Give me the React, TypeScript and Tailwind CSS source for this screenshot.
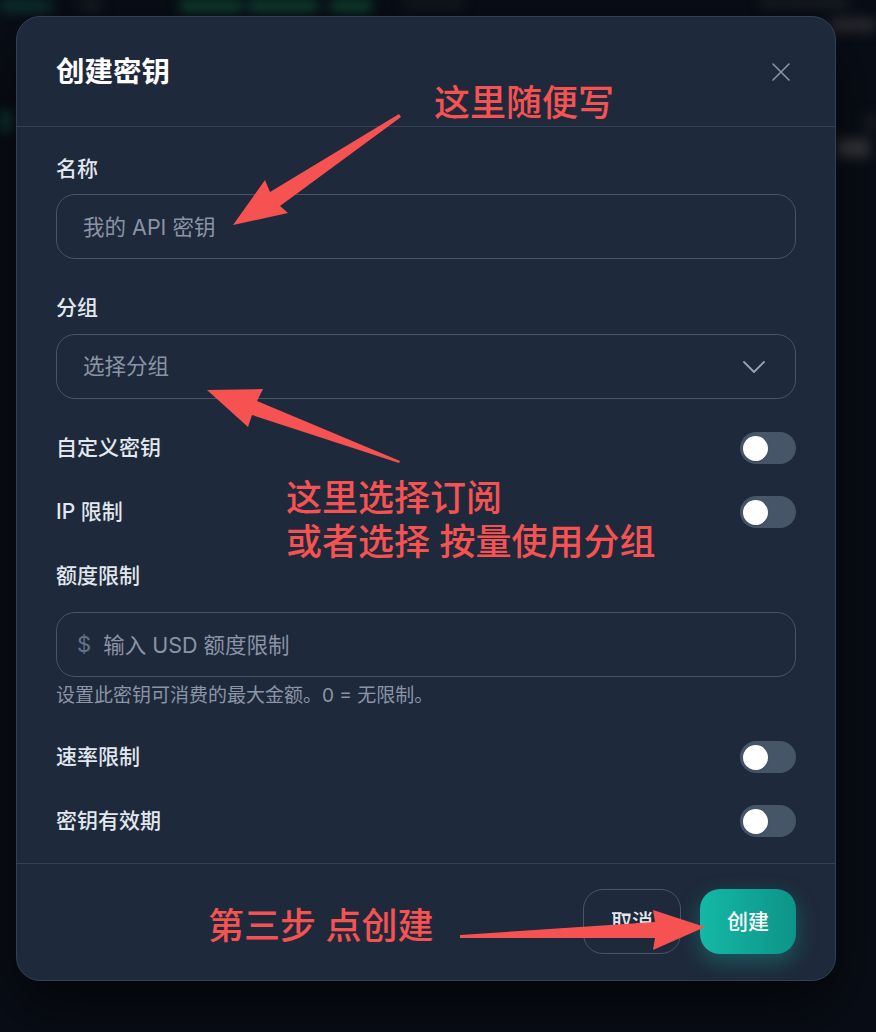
import React from "react";

// Sans stack used by the dialog: Latin from Inter, Chinese from Noto Sans CJK SC.
const FONT = "font-['Inter','Noto_Sans_CJK_SC',sans-serif]";

function Toggle() {
  return (
    <div className="flex h-8 w-14 shrink-0 items-center rounded-full bg-[#475569] p-[3px]">
      <div className="h-[25px] w-[25px] rounded-full bg-white shadow-sm" />
    </div>
  );
}

function ToggleRow({ label, className = "" }: { label: string; className?: string }) {
  return (
    <div className={`flex h-8 items-center justify-between ${className}`}>
      <span className="text-[21px] font-medium leading-7 text-[#e2e8f0]">{label}</span>
      <Toggle />
    </div>
  );
}

function FieldLabel({ children, className = "" }: { children: React.ReactNode; className?: string }) {
  return (
    <div className={`h-7 text-[21px] font-medium leading-7 text-[#e2e8f0] ${className}`}>{children}</div>
  );
}

// Dimmed app page sitting behind the dialog
function BackdropPage() {
  return (
    <div className="pointer-events-none blur-[6px]">
      <div className="flex h-[12px] items-start">
        <div className="h-[12px] w-[52px] bg-[#0e3331]" />
        <div className="w-[28px]" />
        <div className="h-[10px] w-[22px] bg-[#1c1e26]" />
        <div className="w-[78px]" />
        <div className="h-[12px] w-[62px] bg-[#0f4430]" />
        <div className="w-[6px]" />
        <div className="h-[12px] w-[70px] bg-[#0f4430]" />
        <div className="w-[12px]" />
        <div className="h-[12px] w-[42px] bg-[#0f4430]" />
        <div className="w-[32px]" />
        <div className="h-[8px] w-[60px] bg-[#1a1c24]" />
        <div className="w-[296px]" />
        <div className="h-[6px] w-[90px] bg-[#24262c]" />
      </div>
      <div className="flex h-[20px] items-end justify-end">
        <div className="h-[14px] w-[46px] bg-[#2a2a2e]" />
      </div>
      <div className="flex h-[100px] items-end justify-between">
        <div className="h-[22px] w-[12px] bg-[#0f3b30]" />
        <div className="h-[18px] w-[10px] bg-[#1e2026]" />
      </div>
      <div className="flex h-[26px] items-end justify-end pr-[6px]">
        <div className="h-[20px] w-[34px] rounded bg-[#34343a]" />
      </div>
    </div>
  );
}

function CreateKeyDialog() {
  return (
    <div
      className={`absolute left-4 top-4 w-[820px] overflow-hidden rounded-3xl border border-[#334155] bg-[#1e293b] shadow-[0_25px_60px_rgba(0,0,0,0.6)] ${FONT}`}
    >
      {/* Header */}
      <div className="flex h-[110px] items-center justify-between border-b border-[#334155] pl-[39px] pr-[45px]">
        <h2 className="text-[28.5px] font-semibold leading-9 text-white">创建密钥</h2>
        <button className="text-[#8a94a6]" aria-label="关闭">
          <svg width="18" height="18" viewBox="0 0 18 18" fill="none" stroke="currentColor" strokeWidth="1.6" strokeLinecap="round">
            <path d="M1 1L17 17M17 1L1 17" />
          </svg>
        </button>
      </div>

      {/* Body */}
      <div className="flex flex-col px-[39px] pb-[26px] pt-[28px]">
        <FieldLabel>名称</FieldLabel>
        <input
          className="mt-[11px] h-[65px] w-full rounded-[19px] border border-[#475569] bg-transparent px-[26px] text-[21.5px] text-[#e2e8f0] outline-none placeholder:text-[#8a94a6]"
          placeholder="我的 API 密钥"
        />

        <FieldLabel className="mt-[35px]">分组</FieldLabel>
        <button className="mt-3 flex h-[65px] w-full items-center justify-between rounded-[19px] border border-[#475569] bg-transparent pl-[26px] pr-[30px]">
          <span className="text-[21.5px] text-[#8a94a6]">选择分组</span>
          <svg width="22" height="12" viewBox="0 0 22 12" fill="none" stroke="#94a3b8" strokeWidth="1.8" strokeLinecap="round" strokeLinejoin="round">
            <path d="M1 1L11 11L21 1" />
          </svg>
        </button>

        <ToggleRow label="自定义密钥" className="mt-[33px]" />
        <ToggleRow label="IP 限制" className="mt-8" />

        <FieldLabel className="mt-[34px]">额度限制</FieldLabel>
        <div className="mt-[22px] flex h-[65px] w-full items-center gap-[12px] rounded-[19px] border border-[#475569] pl-[20px]">
          <span className="text-[22px] text-[#64748b]">$</span>
          <input
            className="h-full flex-1 bg-transparent text-[21.5px] text-[#e2e8f0] outline-none placeholder:text-[#8a94a6]"
            placeholder="输入 USD 额度限制"
          />
        </div>
        <p className="mt-[7px] text-[19px] leading-6 text-[#8b95a7]">设置此密钥可消费的最大金额。0 = 无限制。</p>

        <ToggleRow label="速率限制" className="mt-[33px]" />
        <ToggleRow label="密钥有效期" className="mt-8" />
      </div>

      {/* Footer */}
      <div className="flex justify-end gap-[19px] border-t border-[#334155] pb-[26px] pr-[39px] pt-[25px]">
        <button className="h-[65px] w-[98px] rounded-[20px] border border-[#475569] text-[21px] font-medium text-[#e2e8f0]">
          取消
        </button>
        <button className="h-[65px] w-[96px] rounded-[20px] bg-gradient-to-r from-[#14b8a6] to-[#0d9488] text-[21px] font-medium text-white shadow-[0_8px_22px_rgba(20,184,166,0.35)]">
          创建
        </button>
      </div>
    </div>
  );
}

// Red hand-drawn callouts over the dialog
function Callouts() {
  const red = "#f75252";
  return (
    <>
      <svg className="pointer-events-none absolute left-0 top-0" width="876" height="1032" viewBox="0 0 876 1032">
        <polygon fill={red} points="233,225 265,180 270,192 399,114 401,117 280,206 288,213" />
        <polygon fill={red} points="207,390 263,389 257,401 400,461 399,463 252,415 248,427" />
        <polygon fill={red} points="705,927 653,910 655,922 460,935 460,938 655,938 653,950" />
      </svg>
      <div className={`pointer-events-none absolute left-[434px] top-[83px] text-[36px] font-medium leading-[40px] text-[#f75252] ${FONT}`}>
        这里随便写
      </div>
      <div className={`pointer-events-none absolute left-[286px] top-[476px] text-[36px] font-medium leading-[44px] text-[#f75252] ${FONT}`}>
        这里选择订阅
        <br />
        或者选择 按量使用分组
      </div>
      <div className={`pointer-events-none absolute left-[208px] top-[906px] text-[36px] font-medium leading-[40px] text-[#f75252] ${FONT}`}>
        第三步 点创建
      </div>
    </>
  );
}

export default function App() {
  return (
    <div className="relative h-[1032px] w-[876px] overflow-hidden bg-[#090d16]">
      <BackdropPage />
      <CreateKeyDialog />
      <Callouts />
    </div>
  );
}
